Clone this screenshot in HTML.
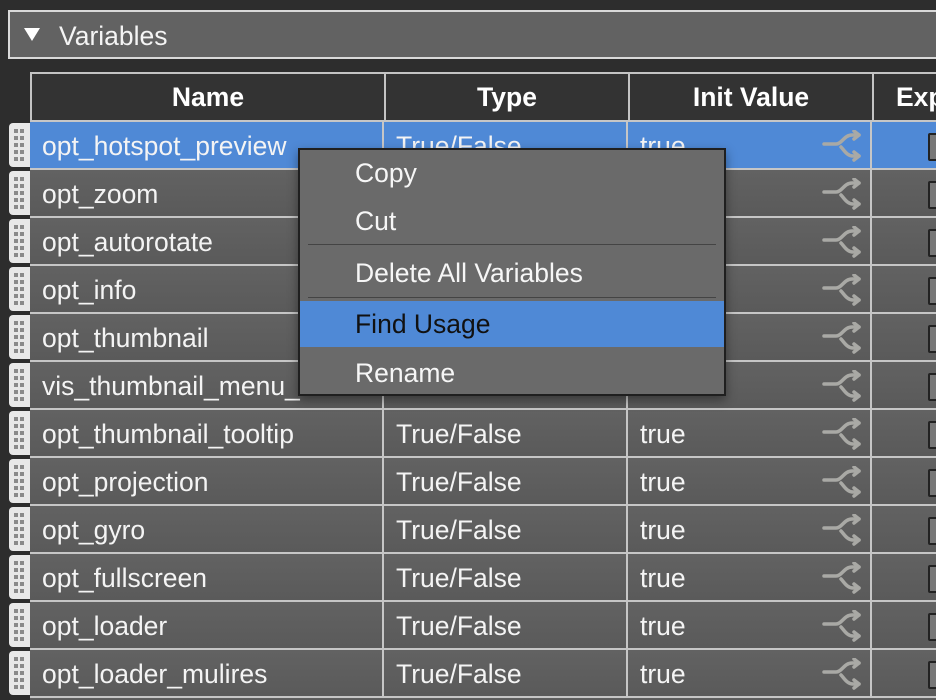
<!DOCTYPE html>
<html style="width:936px;height:700px;overflow:hidden"><head><style>
*{margin:0;padding:0;box-sizing:border-box}
body{width:936px;height:700px;background:#2d2d2d;font-family:"Liberation Sans",Arial,sans-serif;position:relative;overflow:hidden;color:#f2f2f2}
.panel{position:absolute;left:8px;top:10px;width:928px;height:49px;background:#626262;border:2px solid #d9d9d9;border-right:none}
.panel .tri{position:absolute;left:14px;top:16px;width:0;height:0;border-left:8px solid transparent;border-right:8px solid transparent;border-top:13px solid #fff}
.panel span{position:absolute;left:49px;top:9px;font-size:26.5px;color:#f4f4f4}
.hdr{position:absolute;top:72px;height:48px;background:#333;border-top:2px solid #c4c4c4;border-left:2px solid #c4c4c4;font-weight:bold;font-size:26.5px;text-align:center;line-height:46px;color:#fff;overflow:hidden}
.row{position:absolute;left:30px;width:906px;height:48px;background:linear-gradient(#626262,#5a5a5a);border-top:2px solid #c6c6c6;overflow:hidden}
.row.sel{background:#4f89d6}
.cell{position:absolute;top:0;height:46px;line-height:48px;font-size:26.5px;color:#f4f4f4;padding-left:12px;white-space:nowrap}
.vl{position:absolute;top:0;width:2px;height:48px;background:#c6c6c6}
.h{position:absolute;left:9px;width:21px;height:44px;background:#e8e8e8;border-radius:4px 0 0 4px}
.h i{position:absolute;width:4px;height:4px;background:#8a8a8a}
.cb{position:absolute;left:898px;top:11px;width:30px;height:28px;border:2px solid #222;background:#777;border-radius:2px}
.menu{position:absolute;left:298px;top:148px;width:428px;height:248px;background:#6a6a6a;border:2px solid #1f1f1f;box-shadow:0 4px 10px rgba(0,0,0,.4)}
.mi{position:absolute;left:0;width:424px;height:46px;line-height:46px;padding-left:55px;font-size:26.5px;color:#f6f6f6}
.sep{position:absolute;left:8px;width:408px;height:1px;background:#444}
</style></head><body>
<div class="panel"><div class="tri"></div><span>Variables</span></div>
<div class="hdr" style="left:30px;width:354px">Name</div>
<div class="hdr" style="left:384px;width:244px">Type</div>
<div class="hdr" style="left:628px;width:244px">Init Value</div>
<div class="hdr" style="left:872px;width:64px;text-align:left;padding-left:22px">Exp</div>
<div id="rows"></div>
<div class="menu">
<div class="mi" style="top:0">Copy</div>
<div class="mi" style="top:48px">Cut</div>
<div class="sep" style="top:94px"></div>
<div class="mi" style="top:100px">Delete All Variables</div>
<div class="sep" style="top:147px"></div>
<div class="mi" style="top:151px;background:#4f89d6;color:#111">Find Usage</div>
<div class="mi" style="top:200px">Rename</div>
</div>
<script>
var names=["opt_hotspot_preview","opt_zoom","opt_autorotate","opt_info","opt_thumbnail","vis_thumbnail_menu_","opt_thumbnail_tooltip","opt_projection","opt_gyro","opt_fullscreen","opt_loader","opt_loader_mulires"];
var h="";
for(var i=0;i<12;i++){var y=120+i*48;
var dots="";for(var r=0;r<5;r++)for(var c=0;c<2;c++)dots+='<i style="left:'+(5+c*6)+'px;top:'+(6+r*7)+'px"></i>';
h+='<div class="h" style="top:'+(y+3)+'px">'+dots+'</div>';
h+='<div class="row'+(i==0?' sel':'')+'" style="top:'+y+'px">'+
'<div class="cell" style="left:0">'+names[i]+'</div>'+
'<div class="vl" style="left:352px"></div><div class="cell" style="left:354px">True/False</div>'+
'<div class="vl" style="left:596px"></div><div class="cell" style="left:598px">true</div>'+
'<svg style="position:absolute;left:792px;top:8px" width="42" height="32" viewBox="0 0 42 32" fill="none" stroke="#a9a9a5" stroke-width="3.5" stroke-linecap="round" stroke-linejoin="round"><path d="M2 14H14C20 14 22 5 30 5H37"/><path d="M32 1L37 5L32 9"/><path d="M19 17C22 20 25 26 31 26H37"/><path d="M32 22L37 26L32 30"/></svg>'+
'<div class="vl" style="left:840px"></div><div class="cb"></div></div>';}
h+='<div class="row" style="top:696px;height:4px"></div>';
document.getElementById("rows").innerHTML=h;
</script>
</body></html>
